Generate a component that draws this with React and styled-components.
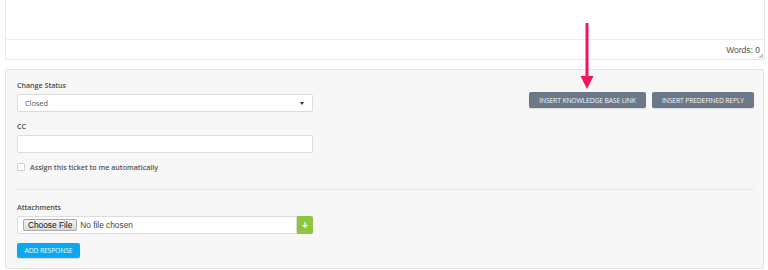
import React from 'react';
import styled, { createGlobalStyle } from 'styled-components';

const GlobalStyle = createGlobalStyle`
  html, body {
    margin: 0;
    padding: 0;
    background: #ffffff;
  }
  body {
    font-family: "Open Sans", "Liberation Sans", sans-serif;
    color: #333;
  }
`;

const Page = styled.div`
  position: relative;
  width: 768px;
  height: 270px;
  overflow: hidden;
  padding: 0 3px 0 5px;
  box-sizing: border-box;
`;

const Editor = styled.div`
  border: 1px solid #e8e8e8;
  border-top: none;
  background: #fff;
  width: 760px;
  box-sizing: border-box;
`;

const EditorArea = styled.div`
  height: 39px;
  border-bottom: 1px solid #ececec;
`;

const StatusBar = styled.div`
  position: relative;
  height: 19px;
  display: flex;
  align-items: center;
  justify-content: flex-end;
  padding-right: 4px;
  font-family: "Liberation Sans", Arial, sans-serif;
  font-size: 8.5px;
  color: #555;
`;

const Grip = styled.span`
  position: absolute;
  right: 1px;
  bottom: 1px;
  width: 0;
  height: 0;
  border-left: 5px solid transparent;
  border-bottom: 5px solid #c8c8c8;
`;

const Panel = styled.div`
  margin-top: 9px;
  width: 759px;
  height: 200px;
  box-sizing: border-box;
  background: #f7f7f7;
  border: 1px solid #e3e3e3;
  border-radius: 2px;
  padding: 10px 9px 0 11px;
  display: grid;
  grid-template-columns: 296px 1fr;
  align-content: start;
`;

const LeftCol = styled.div`
  display: flex;
  flex-direction: column;
`;

const RightCol = styled.div`
  display: flex;
  justify-content: flex-end;
  align-items: flex-start;
  gap: 6px;
  padding-top: 12px;
`;

const Label = styled.div`
  font-size: 7.1px;
  font-weight: 600;
  color: #4a4a4a;
  line-height: 10px;
  margin-bottom: ${p => p.$mb || 4}px;
`;

const Select = styled.div`
  height: 18px;
  box-sizing: border-box;
  background: #fff;
  border: 1px solid #dcdcdc;
  border-radius: 2px;
  display: flex;
  align-items: center;
  justify-content: space-between;
  padding: 0 8px 0 7px;
  font-size: 7.3px;
  color: #555;
  margin-bottom: 9px;
`;

const Caret = styled.span`
  width: 0;
  height: 0;
  border-left: 2.5px solid transparent;
  border-right: 2.5px solid transparent;
  border-top: 3px solid #333;
`;

const TextInput = styled.div`
  height: 18px;
  box-sizing: border-box;
  background: #fff;
  border: 1px solid #dcdcdc;
  border-radius: 2px;
  margin-bottom: 9px;
`;

const CheckRow = styled.label`
  display: flex;
  align-items: center;
  gap: 5px;
  font-size: 7.1px;
  font-weight: 600;
  color: #555;
  height: 10px;
`;

const Box = styled.span`
  width: 8px;
  height: 8px;
  box-sizing: border-box;
  background: #fff;
  border: 1px solid #cfcfcf;
  border-radius: 1px;
`;

const Divider = styled.div`
  grid-column: 1 / -1;
  height: 1px;
  background: #e6e6e6;
  margin: 17px 0 12px;
`;

const Bottom = styled.div`
  grid-column: 1 / -1;
  display: flex;
  flex-direction: column;
  align-items: flex-start;
`;

const FileRow = styled.div`
  display: flex;
  width: 296px;
  margin-bottom: 9px;
`;

const FileBox = styled.div`
  flex: 1;
  height: 18px;
  box-sizing: border-box;
  background: #fff;
  border: 1px solid #dcdcdc;
  border-radius: 2px 0 0 2px;
  display: flex;
  align-items: center;
  padding-left: 5px;
  gap: 3px;
  font-family: "Liberation Sans", Arial, sans-serif;
  font-size: 8.3px;
  color: #444;
`;

const ChooseBtn = styled.span`
  height: 12px;
  box-sizing: border-box;
  padding: 0 4px;
  display: flex;
  align-items: center;
  background: linear-gradient(#f2f2f2, #dcdcdc);
  border: 1px solid #a9a9a9;
  border-radius: 2px;
  color: #111;
`;

const PlusBtn = styled.span`
  width: 16px;
  height: 18px;
  background: #8dc63f;
  border-radius: 0 2px 2px 0;
  display: flex;
  align-items: center;
  justify-content: center;
  color: #fff;
  font-family: "Liberation Sans", Arial, sans-serif;
  font-weight: 700;
  font-size: 10px;
`;

const Button = styled.button`
  border: none;
  border-radius: 2px;
  cursor: pointer;
  height: ${p => p.$h || 16}px;
  padding: 0 ${p => p.$px || 6}px;
  background: ${p => p.$bg};
  color: #f2f5f8;
  font-family: "Open Sans", "Liberation Sans", sans-serif;
  font-size: 6.8px;
  font-weight: 400;
  text-transform: uppercase;
  letter-spacing: -0.15px;
  white-space: nowrap;
  box-shadow: 0 1px 1px rgba(0, 0, 0, 0.12);
`;

const Arrow = styled.svg`
  position: absolute;
  left: 579px;
  top: 23px;
`;

export default function App() {
  return (
    <>
      <GlobalStyle />
      <Page>
        <Editor>
          <EditorArea />
          <StatusBar>
            Words: 0
            <Grip />
          </StatusBar>
        </Editor>
        <Panel>
          <LeftCol>
            <Label>Change Status</Label>
            <Select>
              Closed
              <Caret />
            </Select>
            <Label>CC</Label>
            <TextInput />
            <CheckRow>
              <Box />
              Assign this ticket to me automatically
            </CheckRow>
          </LeftCol>
          <RightCol>
            <Button $bg="#6b7888" style={{ width: 117 }}>Insert Knowledge Base Link</Button>
            <Button $bg="#6b7888" style={{ width: 102 }}>Insert Predefined Reply</Button>
          </RightCol>
          <Divider />
          <Bottom>
            <Label $mb={4}>Attachments</Label>
            <FileRow>
              <FileBox>
                <ChooseBtn>Choose File</ChooseBtn>
                No file chosen
              </FileBox>
              <PlusBtn>+</PlusBtn>
            </FileRow>
            <Button $bg="#0aa9ef" $h={15} $px={6} style={{ width: 63 }}>Add Response</Button>
          </Bottom>
        </Panel>
        <Arrow width="16" height="68" viewBox="0 0 16 68">
          <path d="M8 1 L8 54" stroke="#f0175b" strokeWidth="3" strokeLinecap="round" />
          <path d="M1.5 53 L14.5 53 L8 66 Z" fill="#f0175b" />
        </Arrow>
      </Page>
    </>
  );
}
